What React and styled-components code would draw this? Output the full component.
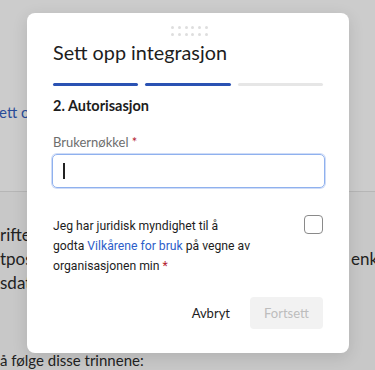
import styled, { createGlobalStyle } from "styled-components";

const GlobalStyle = createGlobalStyle`
  html, body {
    margin: 0;
    padding: 0;
  }
  body {
    font-family: Lato, "Noto Sans", sans-serif;
    background: #ffffff;
    color: #333333;
  }
`;

export default function App() {
  return (
    <>
      <GlobalStyle />
      <Page>
        <TopSection>
          <PageLink>Sett opp integrasjon</PageLink>
        </TopSection>
        <BottomSection>
          <PageLine>
            <span>rifter og tilganger som</span>
          </PageLine>
          <PageLine>
            <span>tpost for å gjøre det</span>
            <span>enkelt</span>
          </PageLine>
          <PageLine>
            <span>sdato og brukernøkkel</span>
          </PageLine>
          <Spacer />
          <PageLine $small>å følge disse trinnene:</PageLine>
        </BottomSection>

        <Overlay />

        <Modal>
          <Handle>
            {Array.from({ length: 12 }).map((_, i) => (
              <Dot key={i} />
            ))}
          </Handle>
          <Title>Sett opp integrasjon</Title>
          <Steps>
            <Step $active />
            <Step $active />
            <Step />
          </Steps>
          <StepTitle>2. Autorisasjon</StepTitle>
          <Label>
            Brukernøkkel <Required>*</Required>
          </Label>
          <FakeInput>
            <Caret />
          </FakeInput>
          <ConsentRow>
            <ConsentText>
              Jeg har juridisk myndighet til å
              <br />
              godta <TermsLink>Vilkårene for bruk</TermsLink> på vegne av
              <br />
              organisasjonen min <Required>*</Required>
            </ConsentText>
            <Checkbox />
          </ConsentRow>
          <Actions>
            <TextButton>Avbryt</TextButton>
            <PrimaryButton disabled>Fortsett</PrimaryButton>
          </Actions>
        </Modal>
      </Page>
    </>
  );
}

const Page = styled.div`
  position: relative;
  width: 375px;
  height: 370px;
  overflow: hidden;
  background: #ffffff;
`;

const TopSection = styled.div`
  height: 192px;
  padding-top: 102px;
  box-sizing: border-box;
  border-bottom: 1px solid #e4e4e4;
`;

const PageLink = styled.div`
  margin-left: -9px;
  font-size: 15px;
  line-height: 20px;
  color: #3460c0;
  white-space: nowrap;
`;

const BottomSection = styled.div`
  background: #fbfbfb;
  height: 178px;
  padding-top: 31px;
  box-sizing: border-box;
`;

const PageLine = styled.div`
  display: grid;
  grid-template-columns: 351px 1fr;
  font-size: ${(p) => (p.$small ? "15px" : "17px")};
  line-height: ${(p) => (p.$small ? "20px" : "24px")};
  color: #2b2b2b;
  white-space: nowrap;
  overflow: hidden;

  & > span {
    overflow: hidden;
  }
`;

const Spacer = styled.div`
  height: 55px;
`;

const Overlay = styled.div`
  position: absolute;
  inset: 0;
  background: rgba(0, 0, 0, 0.2);
`;

const Modal = styled.div`
  position: absolute;
  top: 13px;
  left: 27px;
  width: 322px;
  box-sizing: border-box;
  padding: 13px 26px 24px;
  background: #ffffff;
  border-radius: 8px;
  box-shadow: 0 4px 16px rgba(0, 0, 0, 0.12);
  display: flex;
  flex-direction: column;
  color: #1d1d1d;
`;

const Handle = styled.div`
  align-self: center;
  display: grid;
  grid-template-columns: repeat(6, 3px);
  gap: 4px 3.8px;
  margin-left: 3px;
`;

const Dot = styled.span`
  width: 3px;
  height: 3px;
  border-radius: 50%;
  background: #dedede;
`;

const Title = styled.h1`
  margin: 2px 0 0;
  font-size: 19.8px;
  line-height: 28px;
  font-weight: 400;
`;

const Steps = styled.div`
  display: grid;
  grid-template-columns: repeat(3, 1fr);
  gap: 7px;
  margin-top: 17px;
`;

const Step = styled.div`
  height: 3px;
  border-radius: 2px;
  background: ${(p) => (p.$active ? "#2a52b3" : "#e6e6e6")};
`;

const StepTitle = styled.h2`
  margin: 9px 0 0;
  font-size: 14.5px;
  line-height: 22px;
  font-weight: 700;
`;

const Label = styled.label`
  margin-top: 15px;
  font-size: 13px;
  line-height: 20px;
  color: #6d6d6d;
`;

const Required = styled.span`
  color: #b4232f;
`;

const FakeInput = styled.div`
  margin-top: 2px;
  height: 34px;
  box-sizing: border-box;
  margin-left: -1px;
  margin-right: -2px;
  border: 1px solid #8fb1ee;
  box-shadow: 0 0 0 1px #cfdcf7;
  border-radius: 5px;
  display: flex;
  align-items: center;
  padding-left: 10px;
`;

const Caret = styled.span`
  width: 1.5px;
  height: 16px;
  background: #222222;
`;

const ConsentRow = styled.div`
  margin-top: 28px;
  display: flex;
  justify-content: space-between;
  align-items: flex-start;
`;

const ConsentText = styled.p`
  margin: 0;
  font-family: Roboto, "Noto Sans", sans-serif;
  font-size: 12.2px;
  line-height: 20px;
  color: #1d1d1d;
`;

const TermsLink = styled.a`
  color: #2d5ec9;
  text-decoration: none;
`;

const Checkbox = styled.span`
  flex: none;
  width: 19px;
  height: 19px;
  box-sizing: border-box;
  border: 1.5px solid #8a8a8a;
  border-radius: 4px;
  margin-top: -1px;
`;

const Actions = styled.div`
  margin-top: 21px;
  display: flex;
  justify-content: flex-end;
  align-items: center;
  gap: 20px;
`;

const TextButton = styled.button`
  border: 0;
  background: none;
  padding: 0;
  font-family: inherit;
  font-size: 13px;
  color: #1d1d1d;
`;

const PrimaryButton = styled.button`
  width: 73px;
  height: 32px;
  border: 0;
  border-radius: 4px;
  background: #f2f2f2;
  font-family: inherit;
  font-size: 13px;
  color: #bdbdbd;
`;
